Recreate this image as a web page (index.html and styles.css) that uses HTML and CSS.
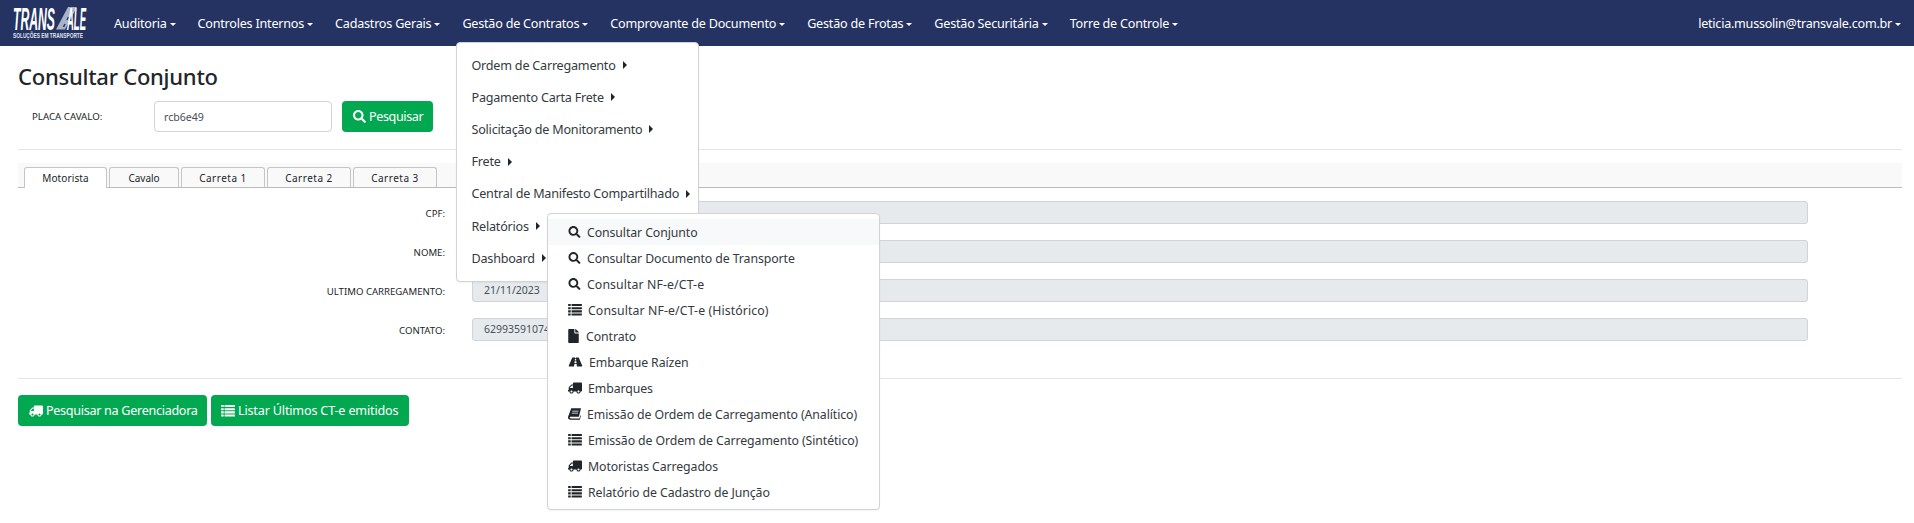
FILE: index.html
```html
<!DOCTYPE html>
<html lang="pt-BR">
<head>
<meta charset="utf-8">
<title>Consultar Conjunto</title>
<link rel="stylesheet" href="styles.css">
</head>
<body>
<svg class="defs" width="0" height="0" aria-hidden="true">
  <symbol id="i-search" viewBox="0 0 512 512"><path d="M505 442.7L405.3 343c-4.5-4.5-10.6-7-17-7H372c27.6-35.3 44-79.7 44-128C416 93.1 322.9 0 208 0S0 93.1 0 208s93.1 208 208 208c48.3 0 92.7-16.4 128-44v16.3c0 6.4 2.5 12.5 7 17l99.7 99.7c9.4 9.4 24.6 9.4 33.9 0l28.3-28.3c9.4-9.4 9.4-24.6.1-34zM208 336c-70.7 0-128-57.2-128-128 0-70.7 57.2-128 128-128 70.7 0 128 57.2 128 128 0 70.7-57.2 128-128 128z"/></symbol>
  <symbol id="i-file" viewBox="0 0 384 512"><path d="M224 136V0H24C10.7 0 0 10.7 0 24v464c0 13.3 10.7 24 24 24h336c13.3 0 24-10.7 24-24V160H248c-13.2 0-24-10.8-24-24zm160-14.1v6.1H256V0h6.1c6.4 0 12.5 2.5 17 7l97.9 98c4.5 4.5 7 10.6 7 16.9z"/></symbol>
  <symbol id="i-truck" viewBox="0 0 640 512"><path transform="translate(640 0) scale(-1 1)" d="M624 352h-16V243.9c0-12.7-5.1-24.9-14.1-33.9L494 110.1c-9-9-21.2-14.1-33.9-14.1H416V48c0-26.5-21.5-48-48-48H48C21.5 0 0 21.5 0 48v320c0 26.5 21.5 48 48 48h16c0 53 43 96 96 96s96-43 96-96h128c0 53 43 96 96 96s96-43 96-96h48c8.8 0 16-7.2 16-16v-32c0-8.8-7.2-16-16-16zM160 464c-26.5 0-48-21.5-48-48s21.5-48 48-48 48 21.5 48 48-21.5 48-48 48zm320 0c-26.5 0-48-21.5-48-48s21.5-48 48-48 48 21.5 48 48-21.5 48-48 48zm80-208H416V144h44.1l99.9 99.9V256z"/></symbol>
  <symbol id="i-road" viewBox="0 0 576 512"><path d="M573.19 402.67l-139.79-320C428.43 71.29 417.6 64 405.68 64h-97.59l2.45 23.16c.5 4.72-3.21 8.84-7.96 8.84h-29.16c-4.75 0-8.46-4.12-7.96-8.84L267.91 64h-97.59c-11.93 0-22.76 7.29-27.73 18.67L2.8 402.67C-6.45 423.86 8.31 448 30.54 448h196.84l10.31-97.68c.86-8.14 7.72-14.32 15.91-14.32h68.8c8.19 0 15.05 6.18 15.91 14.32L348.62 448h196.84c22.23 0 36.99-24.14 27.73-45.33zM260.4 135.16a8 8 0 0 1 7.96-7.16h39.29c4.09 0 7.53 3.09 7.96 7.16l4.6 43.58c.75 7.09-4.81 13.26-11.93 13.26h-40.54c-7.13 0-12.68-6.17-11.93-13.26l4.59-43.58zM315.64 304h-55.29c-9.5 0-16.91-8.23-15.91-17.68l5.07-48c.86-8.14 7.72-14.32 15.91-14.32h45.15c8.19 0 15.05 6.18 15.91 14.32l5.07 48c1 9.45-6.41 17.68-15.91 17.68z"/></symbol>
  <symbol id="i-list" viewBox="0 0 16 14"><path d="M0 0h3v2.4H0zM4 0h12v2.4H4zM0 3.7h3v2.4H0zM4 3.7h12v2.4H4zM0 7.4h3v2.4H0zM4 7.4h12v2.4H4zM0 11.1h3v2.4H0zM4 11.1h12v2.4H4z"/></symbol>
  <symbol id="i-book" viewBox="0 0 16 14"><path d="M4 0h12l-2.6 10.4H3.6c-1 0-1.5.5-1.5 1s.5 1 1.500 1h10.600l.9-4 .8.8-1.300 4.800H3c-1.900 0-3-1-3-2.600 0-.4 0-.8.2-1.200zM5.500 3l-.3 1h7.600l.3-1zM4.900 5.400l-.3 1h7.600l.3-1z"/></symbol>
</svg>

<nav class="navbar">
  <a class="brand" href="#" aria-label="Transvale">
    <svg class="logo" viewBox="0 0 74 33" width="74" height="33">
      <text class="logo-main" x="0" y="23.500" textLength="42" lengthAdjust="spacingAndGlyphs">TRANS</text>
      <path class="logo-road" d="M43 23.500 L55 1 H64 L52 23.500Z"/>
      <path class="logo-dash" d="M50.500 21 L52 18 M54 14 L55.500 11 M57.500 7 L59 4"/>
      <text class="logo-main" x="54" y="23.500" textLength="19" lengthAdjust="spacingAndGlyphs">ALE</text>
      <text class="logo-sub" x="0" y="31.500" textLength="70" lengthAdjust="spacingAndGlyphs">SOLUÇÕES EM TRANSPORTE</text>
    </svg>
  </a>
  <ul class="menu">
    <li class="menu-item">Auditoria<span class="caret"></span></li>
    <li class="menu-item">Controles Internos<span class="caret"></span></li>
    <li class="menu-item">Cadastros Gerais<span class="caret"></span></li>
    <li class="menu-item">Gestão de Contratos<span class="caret"></span></li>
    <li class="menu-item">Comprovante de Documento<span class="caret"></span></li>
    <li class="menu-item">Gestão de Frotas<span class="caret"></span></li>
    <li class="menu-item">Gestão Securitária<span class="caret"></span></li>
    <li class="menu-item">Torre de Controle<span class="caret"></span></li>
  </ul>
  <div class="user">leticia.mussolin@transvale.com.br<span class="caret"></span></div>
</nav>

<main class="content">
  <h1 class="title">Consultar Conjunto</h1>
  <form class="search-row">
    <label class="search-label">PLACA CAVALO:</label>
    <input class="search-input" type="text" value="rcb6e49">
    <button class="btn btn-search" type="button"><svg class="ico"><use href="#i-search"/></svg>Pesquisar</button>
  </form>
  <hr class="rule rule-top">
  <div class="tabs">
    <span class="tab tab-active">Motorista</span>
    <span class="tab tab-cavalo">Cavalo</span>
    <span class="tab tab-carreta">Carreta 1</span>
    <span class="tab tab-carreta">Carreta 2</span>
    <span class="tab tab-carreta">Carreta 3</span>
  </div>
  <div class="fields">
    <label class="field-label">CPF:</label><div class="field"></div>
    <label class="field-label">NOME:</label><div class="field"></div>
    <label class="field-label">ULTIMO CARREGAMENTO:</label><div class="field">21/11/2023</div>
    <label class="field-label">CONTATO:</label><div class="field">62993591074</div>
  </div>
  <hr class="rule rule-bottom">
  <div class="actions">
    <button class="btn btn-truck" type="button"><svg class="ico ico-truck"><use href="#i-truck"/></svg>Pesquisar na Gerenciadora</button>
    <button class="btn btn-list" type="button"><svg class="ico ico-list"><use href="#i-list"/></svg>Listar Últimos CT-e emitidos</button>
  </div>
</main>

<ul class="dropdown dropdown-main">
  <li class="drop-item">Ordem de Carregamento<span class="arrow"></span></li>
  <li class="drop-item">Pagamento Carta Frete<span class="arrow"></span></li>
  <li class="drop-item">Solicitação de Monitoramento<span class="arrow"></span></li>
  <li class="drop-item">Frete<span class="arrow"></span></li>
  <li class="drop-item">Central de Manifesto Compartilhado<span class="arrow"></span></li>
  <li class="drop-item">Relatórios<span class="arrow"></span></li>
  <li class="drop-item">Dashboard<span class="arrow"></span></li>
</ul>

<ul class="dropdown dropdown-sub">
  <li class="sub-item sub-hover"><svg class="sub-ico"><use href="#i-search"/></svg>Consultar Conjunto</li>
  <li class="sub-item"><svg class="sub-ico"><use href="#i-search"/></svg>Consultar Documento de Transporte</li>
  <li class="sub-item sub-nf"><svg class="sub-ico"><use href="#i-search"/></svg>Consultar NF-e/CT-e</li>
  <li class="sub-item sub-nf"><svg class="sub-ico sub-ico-wide"><use href="#i-list"/></svg>Consultar NF-e/CT-e (Histórico)</li>
  <li class="sub-item"><svg class="sub-ico sub-ico-file"><use href="#i-file"/></svg>Contrato</li>
  <li class="sub-item"><svg class="sub-ico sub-ico-road"><use href="#i-road"/></svg>Embarque Raízen</li>
  <li class="sub-item"><svg class="sub-ico sub-ico-wide"><use href="#i-truck"/></svg>Embarques</li>
  <li class="sub-item"><svg class="sub-ico"><use href="#i-book"/></svg>Emissão de Ordem de Carregamento (Analítico)</li>
  <li class="sub-item"><svg class="sub-ico sub-ico-wide"><use href="#i-list"/></svg>Emissão de Ordem de Carregamento (Sintético)</li>
  <li class="sub-item"><svg class="sub-ico sub-ico-wide"><use href="#i-truck"/></svg>Motoristas Carregados</li>
  <li class="sub-item"><svg class="sub-ico sub-ico-wide"><use href="#i-list"/></svg>Relatório de Cadastro de Junção</li>
</ul>
</body>
</html>
```

FILE: styles.css
```css
* { box-sizing: border-box; }
html, body { margin: 0; padding: 0; }
body {
  position: relative;
  height: 523px;
  overflow: hidden;
  background: #fff;
  color: #212529;
  font-family: "Noto Sans", "Open Sans", sans-serif;
  font-size: 13px;
}
.defs { position: absolute; }

.navbar {
  display: flex;
  align-items: center;
  height: 46px;
  padding: 0 13px;
  background: #253362;
  color: #fff;
}
.brand { display: block; width: 74px; height: 33px; margin-top: -1px; }
.logo { display: block; fill: #fff; overflow: visible; }
.logo-main { font-family: "Liberation Sans", sans-serif; font-weight: 700; font-style: italic; font-size: 31px; }
.logo-sub { font-family: "Liberation Sans", sans-serif; font-weight: 700; font-size: 6.500px; fill: #dfe3ee; }
.logo-road { fill: #aab2c8; }
.logo-dash { stroke: #253362; stroke-width: 1.500; fill: none; }
.menu {
  display: flex;
  list-style: none;
  margin: 0 0 0 27px;
  padding: 0;
  gap: 22px;
}
.menu-item, .user { white-space: nowrap; font-size: 12.600px; letter-spacing: -.22px; }
.user { margin-left: auto; letter-spacing: -.25px; }
.caret {
  display: inline-block;
  margin-left: 3px;
  vertical-align: 2px;
  border-top: 3.500px solid currentColor;
  border-left: 3.500px solid transparent;
  border-right: 3.500px solid transparent;
}

.content { padding: 0 12px 0 18px; }
.title {
  margin: 0;
  padding-top: 15px;
  height: 55px;
  font-size: 22px;
  letter-spacing: -.25px;
  line-height: 31px;
  font-weight: 500;
  color: #212529;
}
.search-row { display: flex; align-items: center; height: 31px; }
.search-label { width: 136px; padding-left: 14px; font-size: 9.700px; }
.search-input {
  width: 178px;
  height: 31px;
  padding: 0 9px;
  border: 1px solid #ced4da;
  border-radius: 4px;
  color: #495057;
  font: 10.600px "Noto Sans", sans-serif;
}
.btn {
  display: inline-flex;
  align-items: center;
  height: 31px;
  border: 0;
  border-radius: 4px;
  background: #02a84f;
  color: #fff;
  font-family: "Noto Sans", sans-serif;
  font-size: 12.600px;
  white-space: nowrap;
}
.btn-search { width: 91px; margin-left: 10px; padding: 0 11px; letter-spacing: -.4px; }
.ico { width: 13px; height: 13px; margin-right: 3px; fill: #fff; flex: none; }
.ico-truck { width: 14px; height: 12px; }
.ico-list { width: 14px; height: 12px; }
.rule { margin: 0; border: 0; border-top: 1px solid #e3e5e8; }
.rule-top { margin-top: 17px; }
.tabs {
  display: flex;
  align-items: flex-start;
  height: 25px;
  margin-top: 13px;
  padding: 4px 0 0 6px;
  gap: 2px;
  background: #f9f9f9;
  border-bottom: 1px solid #bcbcbc;
}
.tab {
  display: flex;
  align-items: center;
  justify-content: center;
  width: 84px;
  height: 20px;
  border: 1px solid #c5c5c5;
  border-bottom: 0;
  border-radius: 3px 3px 0 0;
  background: #f9f9f9;
  font-size: 10px;
}
.tab-active { width: 83px; height: 21px; background: #fff; letter-spacing: .1px; }
.tab-cavalo { width: 70px; }
.tab-carreta { letter-spacing: .5px; }

.fields {
  display: grid;
  grid-template-columns: 427px 1336px;
  column-gap: 27px;
  row-gap: 16px;
  margin-top: 13px;
  align-items: center;
}
.field-label { padding-top: 2px; text-align: right; font-size: 9.600px; }
.field {
  height: 23px;
  padding-left: 11px;
  border: 1px solid #ced4da;
  border-radius: 3px;
  background: #e7eaed;
  color: #495057;
  font-size: 10.500px;
  line-height: 21px;
}
.rule-bottom { margin-top: 37px; }
.actions { display: flex; gap: 4px; margin-top: 16px; }
.btn-truck { width: 189px; padding: 0 11px; letter-spacing: -.3px; }
.btn-list { width: 198px; padding: 0 10px; letter-spacing: -.17px; }

.dropdown {
  position: absolute;
  list-style: none;
  margin: 0;
  padding: 0;
  background: #fff;
  border: 1px solid #d0d2d4;
  border-radius: 4px;
  color: #343a40;
  box-shadow: 0 1px 2px rgba(0,0,0,.05);
}
.dropdown-main { left: 456px; top: 42px; width: 243px; height: 240px; padding: 6px 0 0; }
.drop-item { display: flex; align-items: center; height: 32.200px; padding-left: 14.500px; white-space: nowrap; font-size: 12.600px; letter-spacing: -.22px; }
.arrow {
  display: inline-block;
  margin-left: 7px;
  border-left: 4px solid #212529;
  border-top: 4px solid transparent;
  border-bottom: 4px solid transparent;
}
.dropdown-sub { left: 547px; top: 213px; width: 333px; height: 297px; padding: 5px 0 0; }
.sub-item { display: flex; align-items: center; height: 26px; padding-left: 20px; white-space: nowrap; font-size: 12.300px; letter-spacing: -.09px; }
.sub-nf { letter-spacing: .1px; }
.sub-hover { background: #f8f9fa; }
.sub-ico { flex: none; width: 13px; height: 12px; margin-right: 6px; fill: #212529; }
.sub-ico-wide { width: 14px; }
.sub-ico-file { width: 11px; height: 14px; margin-right: 7px; }
.sub-ico-road { width: 15px; }
```
